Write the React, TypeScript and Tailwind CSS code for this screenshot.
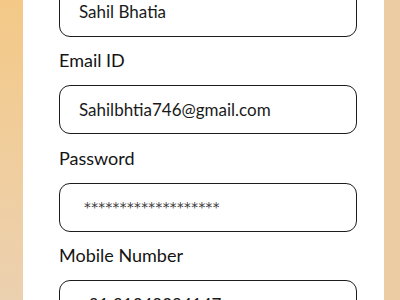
const FIELDS = [
  { label: "Email ID", value: "Sahilbhtia746@gmail.com" },
  { label: "Password", value: "*******************", secret: true },
  { label: "Mobile Number", value: "+91 91348294147" },
];

function InputBox({ value, secret }: { value: string; secret?: boolean }) {
  return (
    <div className="h-[49px] w-[298px] rounded-[11px] border-[1.5px] border-[#1c1c1c] bg-white flex items-center">
      {secret ? (
        <span className="pl-[24px] text-[13.5px] tracking-[0.4px] text-[#3a3a3a] font-['DejaVu_Sans',sans-serif]">
          {value}
        </span>
      ) : (
        <span className="pl-[19px] text-[17px] text-[#1a1a1a]">{value}</span>
      )}
    </div>
  );
}

export default function App() {
  return (
    <div className="w-[400px] h-[300px] overflow-hidden flex font-['Lato',sans-serif]">
      <div className="w-[23px] shrink-0 h-full bg-gradient-to-b from-[#f4c987] to-[#ecd1b0]" />
      <div className="w-[361px] shrink-0 bg-white pl-[36px]">
        <div className="mt-[-12.5px]">
          <InputBox value="Sahil Bhatia" />
          {FIELDS.map((f) => (
            <div key={f.label}>
              <div className="mt-[11.5px] mb-[13px] text-[18px] leading-[24px] text-[#141414]">
                {f.label}
              </div>
              <InputBox value={f.value} secret={f.secret} />
            </div>
          ))}
        </div>
      </div>
      <div className="w-[16px] shrink-0 h-full bg-[#eccda3]" />
    </div>
  );
}
